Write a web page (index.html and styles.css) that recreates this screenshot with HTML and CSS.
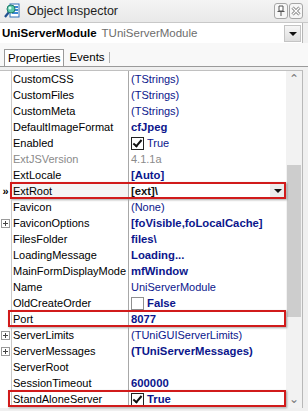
FILE: index.html
```html
<!DOCTYPE html>
<html lang="en">
<head>
    <meta charset="UTF-8">
    <title>Object Inspector</title>
    <link rel="stylesheet" href="styles.css">
</head>
<body>

<div class="inspector">
    <div class="titlebar">
        <svg class="logo" width="16" height="16" viewBox="0 0 16 16">
            <rect x="6" y="1" width="9" height="13" fill="#fff" stroke="#2d6fb8"/>
            <rect x="8" y="3" width="6" height="2" fill="#3a86d4"/>
            <rect x="8" y="6" width="6" height="2" fill="#3a86d4"/>
            <rect x="8" y="9" width="6" height="2" fill="#3a86d4"/>
            <line x1="5" y1="9" x2="1" y2="14" stroke="#1f4f8f" stroke-width="2.2"/>
            <circle cx="7" cy="6" r="4" fill="#5cc8a8" stroke="#1f7a6a"/>
            <circle cx="6" cy="5" r="1.5" fill="#d8fff0"/>
        </svg>
        <span class="title">Object Inspector</span>
        <span class="tbtn">
            <svg width="10" height="12" viewBox="0 0 10 12">
                <path d="M3 1h4v5H3z" fill="#fff" stroke="#555"/>
                <path d="M1.5 6.5h7" stroke="#555"/>
                <path d="M5 7v4" stroke="#555"/>
            </svg>
        </span>
        <span class="tbtn">
            <svg width="10" height="10" viewBox="0 0 10 10">
                <path d="M1.5 1.5l7 7M8.5 1.5l-7 7" stroke="#7a7a7a" stroke-width="3"/>
                <path d="M1.5 1.5l7 7M8.5 1.5l-7 7" stroke="#fff" stroke-width="1.3"/>
            </svg>
        </span>
    </div>

    <div class="combo">
        <span class="obj">UniServerModule</span>
        <span class="cls">TUniServerModule</span>
        <span class="drop"></span>
    </div>

    <div class="tabs">
        <span class="tab active">Properties</span>
        <span class="tab">Events</span>
    </div>

    <div class="body">
        <div class="grid">
            <div class="row"><span class="gut"></span><span class="name">CustomCSS</span><span class="val">(TStrings)</span></div>
            <div class="row"><span class="gut"></span><span class="name">CustomFiles</span><span class="val">(TStrings)</span></div>
            <div class="row"><span class="gut"></span><span class="name">CustomMeta</span><span class="val">(TStrings)</span></div>
            <div class="row"><span class="gut"></span><span class="name">DefaultImageFormat</span><span class="val b">cfJpeg</span></div>
            <div class="row"><span class="gut"></span><span class="name">Enabled</span><span class="val"><i class="chk on"></i>True</span></div>
            <div class="row"><span class="gut"></span><span class="name ro">ExtJSVersion</span><span class="val ro">4.1.1a</span></div>
            <div class="row"><span class="gut"></span><span class="name">ExtLocale</span><span class="val b">[Auto]</span></div>
            <div class="row mark sel"><span class="gut">&raquo;</span><span class="name">ExtRoot</span><span class="val b edit">[ext]\<span class="pick"></span></span></div>
            <div class="row"><span class="gut"></span><span class="name">Favicon</span><span class="val">(None)</span></div>
            <div class="row"><span class="gut"><i class="plus"></i></span><span class="name">FaviconOptions</span><span class="val b">[foVisible,foLocalCache]</span></div>
            <div class="row"><span class="gut"></span><span class="name">FilesFolder</span><span class="val b">files\</span></div>
            <div class="row"><span class="gut"></span><span class="name">LoadingMessage</span><span class="val b">Loading...</span></div>
            <div class="row"><span class="gut"></span><span class="name">MainFormDisplayMode</span><span class="val b">mfWindow</span></div>
            <div class="row"><span class="gut"></span><span class="name">Name</span><span class="val">UniServerModule</span></div>
            <div class="row"><span class="gut"></span><span class="name">OldCreateOrder</span><span class="val b"><i class="chk"></i>False</span></div>
            <div class="row mark"><span class="gut"></span><span class="name">Port</span><span class="val b">8077</span></div>
            <div class="row"><span class="gut"><i class="plus"></i></span><span class="name">ServerLimits</span><span class="val">(TUniGUIServerLimits)</span></div>
            <div class="row"><span class="gut"><i class="plus"></i></span><span class="name">ServerMessages</span><span class="val b">(TUniServerMessages)</span></div>
            <div class="row"><span class="gut"></span><span class="name">ServerRoot</span><span class="val"></span></div>
            <div class="row"><span class="gut"></span><span class="name">SessionTimeout</span><span class="val b">600000</span></div>
            <div class="row mark"><span class="gut"></span><span class="name">StandAloneServer</span><span class="val b"><i class="chk on"></i>True</span></div>
        </div>
        <div class="scrollbar">
            <span class="arrow">&#8963;</span>
            <span class="track"><span class="thumb"></span></span>
            <span class="arrow">&#8964;</span>
        </div>
    </div>
</div>

</body>
</html>
```

FILE: styles.css
```css
html, body {
    margin: 0;
    padding: 0;
}
body {
    width: 308px;
    height: 411px;
    overflow: hidden;
    background-color: #f0f0f0;
    font-family: "Liberation Sans", Arial, sans-serif;
    font-size: 11px;
    color: #000;
}
.inspector {
    width: 308px;
    height: 411px;
    display: flex;
    flex-direction: column;
}
.titlebar {
    height: 22px;
    display: flex;
    align-items: center;
    padding-left: 4px;
    background: linear-gradient(#f4f4f4, #e9e9e9);
    border-bottom: 1px solid #c8c8c8;
}
.logo {
    margin-right: 7px;
}
.title {
    flex: 1;
    font-size: 12.5px;
    color: #1e1e1e;
}
.tbtn {
    width: 12px;
    height: 14px;
    margin-right: 1px;
    border: 1px solid #a6a6a6;
    border-radius: 3px;
    background: #f7f7f7;
    display: flex;
    align-items: center;
    justify-content: center;
}
.tbtn:last-child {
    margin-right: 5px;
}
.combo {
    height: 20px;
    display: flex;
    align-items: center;
    background: #fff;
    border-right: 1px solid #b5b5b5;
    margin-right: 5px;
    padding-left: 2px;
}
.obj {
    font-weight: bold;
    font-size: 11.5px;
}
.cls {
    margin-left: 5px;
    flex: 1;
    color: #6d6d6d;
    font-size: 11.5px;
}
.drop {
    width: 15px;
    height: 15px;
    margin-right: 1px;
    background: linear-gradient(#f6f6f6, #dedede);
    border: 1px solid #c4c4c4;
    position: relative;
}
.drop::after,
.pick::after {
    content: "";
    position: absolute;
    left: 4px;
    top: 6px;
    border-left: 4px solid transparent;
    border-right: 4px solid transparent;
    border-top: 4px solid #111;
}
.tabs {
    height: 23px;
    display: flex;
    align-items: flex-end;
    padding-left: 4px;
    background: #f8f8f8;
    border-bottom: 1px solid #9a9a9a;
}
.tab {
    height: 16px;
    line-height: 16px;
    padding: 0 4px;
    font-size: 11.5px;
    border-right: 1px solid #b0b0b0;
}
.tab.active {
    background: #fff;
    border: 1px solid #9a9a9a;
    border-bottom: none;
    padding: 0 3px;
}
.tab + .tab {
    margin-left: 1px;
    height: 11px;
    line-height: 11px;
    margin-bottom: 3px;
}
.body {
    flex: 1;
    display: flex;
    padding: 3px 5px 3px 0;
    background: #f0f0f0;
}
.grid {
    width: 286px;
    background: #fff;
    border-top: 1px solid #c0c0c0;
}
.row {
    position: relative;
    display: grid;
    grid-template-columns: 11px 117px 1fr;
    height: 16px;
    line-height: 16px;
    white-space: nowrap;
}
.gut {
    display: flex;
    align-items: center;
    justify-content: center;
    font-size: 11px;
    font-weight: bold;
}
.name {
    border-left: 1px solid #c8c8c8;
    padding-left: 1px;
    overflow: hidden;
}
.val {
    border-left: 1px solid #a8a8a8;
    padding-left: 2px;
    color: #0b168c;
    overflow: hidden;
    display: flex;
    align-items: center;
}
.b {
    font-weight: bold;
    font-size: 11.3px;
}
.ro {
    color: #8a8a8a;
}
.sel .name {
    background: #f4f4f4;
}
.edit {
    color: #111;
    position: relative;
}
.pick {
    position: absolute;
    right: 1px;
    top: 1px;
    width: 15px;
    height: 13px;
    background: #ececec;
}
.pick::after {
    top: 5px;
}
.chk {
    width: 11px;
    height: 11px;
    border: 1px solid #8f8f8f;
    background: #fff;
    margin-right: 3px;
    position: relative;
    display: inline-block;
}
.chk.on {
    border-color: #222;
}
.chk.on::after {
    content: "";
    position: absolute;
    left: 3px;
    top: 0px;
    width: 3px;
    height: 7px;
    border-right: 2px solid #111;
    border-bottom: 2px solid #111;
    transform: rotate(40deg);
}
.plus {
    width: 7px;
    height: 7px;
    border: 1px solid #9a9a9a;
    background: #fff;
    position: relative;
    display: inline-block;
}
.plus::before {
    content: "";
    position: absolute;
    left: 1px;
    top: 3px;
    width: 5px;
    height: 1px;
    background: #444;
}
.plus::after {
    content: "";
    position: absolute;
    left: 3px;
    top: 1px;
    width: 1px;
    height: 5px;
    background: #444;
}
.mark::after {
    content: "";
    position: absolute;
    left: 8px;
    right: 0;
    top: -1px;
    bottom: 0;
    border: 2px solid #d11b1b;
    box-shadow: 1px 1px 2px rgba(0, 0, 0, 0.35);
}
.sel::after {
    left: 10px;
}
.scrollbar {
    width: 16px;
    border-top: 1px solid #c0c0c0;
    border-right: 1px solid #b8b8b8;
    background: #f2f2f2;
    display: flex;
    flex-direction: column;
}
.arrow {
    height: 17px;
    line-height: 17px;
    text-align: center;
    color: #7a7a7a;
    font-size: 12px;
    font-family: "DejaVu Sans", sans-serif;
}
.track {
    flex: 1;
    padding: 77px 1px 0 1px;
}
.thumb {
    display: block;
    height: 152px;
    background: #cdcdcd;
}
```
